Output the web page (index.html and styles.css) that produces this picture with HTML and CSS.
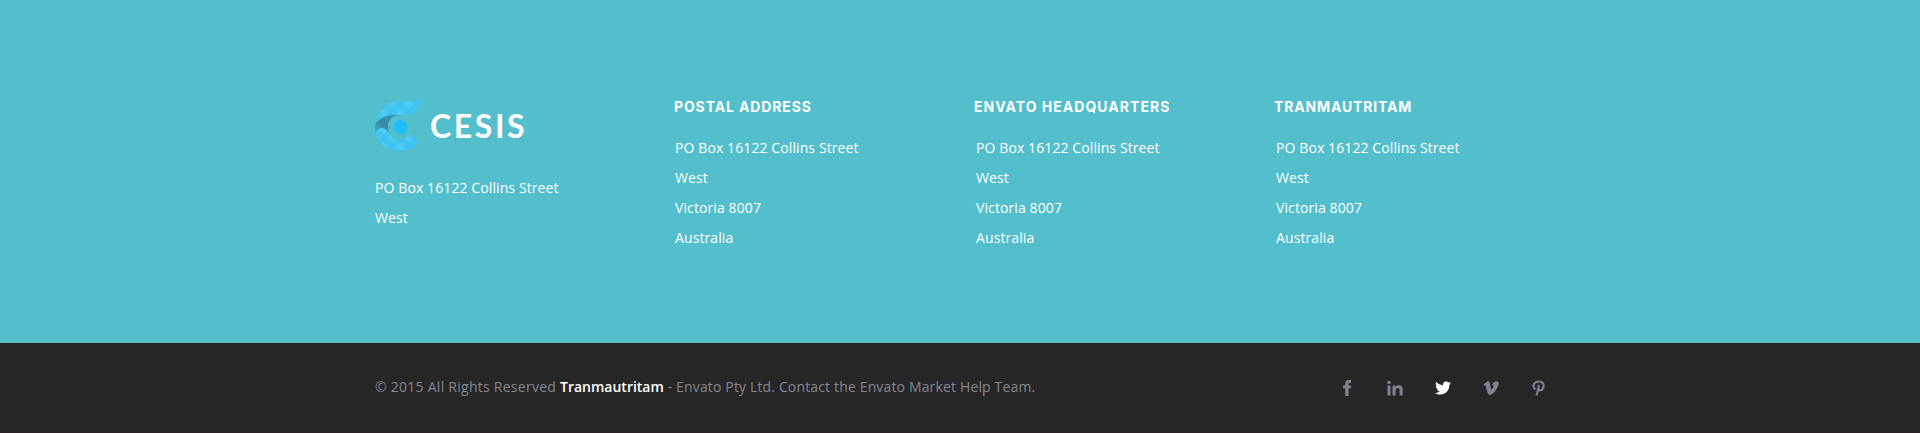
FILE: index.html
```html
<!DOCTYPE html>
<html lang="en">
<head>
<meta charset="utf-8">
<title>Cesis</title>
<link rel="stylesheet" href="styles.css">
</head>
<body>
<footer class="footer">
  <section class="widgets">
    <div class="column">
      <div class="logo">
        <svg class="logo-mark" width="48" height="52" viewBox="0 0 48 52">
          <defs>
            <pattern id="weave" width="12" height="12" patternUnits="userSpaceOnUse" patternTransform="rotate(45)">
              <rect width="12" height="12" fill="#43c7f2"/>
              <rect width="6" height="6" fill="#50cbf3"/>
              <rect x="6" y="6" width="6" height="6" fill="#3cc3f4"/>
            </pattern>
            <linearGradient id="fold" x1="0" y1="1" x2="1" y2="0">
              <stop offset="0" stop-color="#45b2d6"/>
              <stop offset=".4" stop-color="#3889a5"/>
              <stop offset="1" stop-color="#3f9ab6"/>
            </linearGradient>
          </defs>
          <path fill="url(#weave)" d="M0 28C0 23 1 19 3 15C7 6 15 1 24 1C32 1 39 2 46 0C44 8 40 13 33 15H25C17 16 13 20 13 27C13 34 18 40 25 40C29 40 32 38 34 34L43 41C39 47 33 51 25 51C11 51 0 41 0 28Z"/>
          <path fill="#53becc" d="M0 14H3.500L1 24H0Z"/>
          <path fill="url(#fold)" d="M0 30C0 27 0 25 1 23C6 17 14 14 25 15C17 16 13 20 13 27L14 33C9 26 4 27 0 33Z"/>
          <circle cx="25.500" cy="27" r="7" fill="#1fbdfa"/>
        </svg>
        <span class="logo-name">CESIS</span>
      </div>
      <p class="address">PO Box 16122 Collins Street<br>West</p>
    </div>
    <div class="column">
      <h3 class="title title-postal">POSTAL ADDRESS</h3>
      <p class="address">PO Box 16122 Collins Street<br>West<br>Victoria 8007<br>Australia</p>
    </div>
    <div class="column">
      <h3 class="title title-envato">ENVATO HEADQUARTERS</h3>
      <p class="address indented">PO Box 16122 Collins Street<br>West<br>Victoria 8007<br>Australia</p>
    </div>
    <div class="column">
      <h3 class="title title-tran">TRANMAUTRITAM</h3>
      <p class="address indented">PO Box 16122 Collins Street<br>West<br>Victoria 8007<br>Australia</p>
    </div>
  </section>
  <section class="bar">
    <p class="copyright"><span class="rights">© 2015 All Rights Reserved </span><strong class="brand">Tranmautritam</strong> - Envato Pty Ltd. Contact the Envato Market Help Team.</p>
    <nav class="social">
      <svg class="icon" viewBox="0 0 16 16"><path d="M12 0V3H10.500Q9.500 3 9.500 4V5.500H12L11.700 8.300H9.500V16H6.200V8.300H4V5.500H6.200V3.700C6.200 1.300 7.500 0 9.800 0Z"/></svg>
      <svg class="icon" viewBox="0 0 16 16"><circle cx="2" cy="2.500" r="1.800"/><path d="M.5 5.500H3.500V15.500H.5ZM5.500 5.500H8.500V7C9.200 5.700 10.300 5.200 11.700 5.200C14.500 5.200 15.700 7 15.700 9.800V15.500H12.600V10.300C12.600 8.800 12.200 7.900 10.900 7.900C9.300 7.900 8.600 9 8.600 10.500V15.500H5.500Z"/></svg>
      <svg class="icon icon-active" viewBox="0 0 16 16"><path d="M16 3Q15.200 3.500 14.200 3.600Q15.200 3 15.600 1.800Q14.600 2.400 13.500 2.600C12.500 1.500 11 1.300 9.800 1.800C8.300 2.500 7.600 4 8 5.400Q3.900 5.200 1.200 2C.3 3.500.6 5.300 2.200 6.400Q1.400 6.400.7 6C.7 7.600 1.700 8.900 3.300 9.300Q2.600 9.500 1.900 9.300C2.300 10.600 3.500 11.500 4.900 11.600Q2.800 13.200 0 13C5 16 10.200 14.300 12.700 10.700Q14.500 8.200 14.400 4.800Q15.400 4.100 16 3Z"/></svg>
      <svg class="icon" viewBox="0 0 16 16"><path d="M.3 4.600L4 1.700C6 .6 6.800 2.100 7.200 4.500C7.600 7.300 8 9.400 8.500 9.400C9.100 9.400 10.600 6.900 10.500 6C10.400 5.100 9.700 5.200 8.900 5.500C9.900 2.400 11.800 1 13.900 1.200C15.500 1.300 15.900 2.700 15.600 4.500C15 8 11 13 8.100 14.700C6.200 15.500 5 14 4.400 12.200L2.700 6.100C2.300 5 1.900 5.300 1 5.800Z"/></svg>
      <svg class="icon" viewBox="0 0 16 16"><path d="M4.300 9.300C1.400 7.400 2.100 3.600 4.800 2.200C7.800.7 12.300 1.500 12.600 5C12.800 8 11.100 10.400 9 10.200C8 10.100 7.300 9.400 7.300 9.400M8.100 5L5.600 15.500" fill="none" stroke="currentColor" stroke-width="2.100"/></svg>
    </nav>
  </section>
</footer>
</body>
</html>
```
FILE: styles.css
```css
body {
  margin: 0;
  font-family: "Open Sans", sans-serif;
  font-size: 14px;
  color: #fff;
  background: #262626;
}

.footer {
  box-sizing: border-box;
  height: 433px;
  border-bottom: 1px solid #2a2127;
  overflow: hidden;
}

.widgets {
  display: grid;
  grid-template-columns: repeat(4, 300px);
  justify-content: center;
  box-sizing: border-box;
  height: 343px;
  padding-top: 100px;
  padding-left: 30px;
  background: #53becc;
}

.logo {
  display: flex;
  height: 73px;
}

.logo-mark {
  flex: none;
}

.logo-name {
  margin-left: 7px;
  font: 700 32px/51px Lato, sans-serif;
  letter-spacing: 2.6px;
}

.title {
  margin: 0 0 0 -1px;
  height: 33px;
  font: 700 14px/14px Inter, sans-serif;
  white-space: nowrap;
}

.title-postal {
  letter-spacing: 0.88px;
}

.title-envato {
  letter-spacing: 1.02px;
}

.title-tran {
  letter-spacing: 0.85px;
}

.address {
  margin: 0;
  line-height: 30px;
  letter-spacing: 0.1px;
  white-space: nowrap;
}

.indented {
  padding-left: 1px;
}

.bar {
  display: flex;
  justify-content: space-between;
  box-sizing: border-box;
  width: 1174px;
  height: 90px;
  margin: 0 auto;
  padding-top: 34px;
  padding-left: 2px;
}

.copyright {
  margin: 0;
  line-height: 20px;
  letter-spacing: 0.15px;
  color: #84868f;
  white-space: nowrap;
}

.rights {
  letter-spacing: 0.26px;
}

.brand {
  font-weight: 600;
  letter-spacing: 0;
  color: #fff;
}

.social {
  display: flex;
  gap: 32px;
  padding-top: 3px;
}

.icon {
  width: 16px;
  height: 16px;
  color: #80828e;
  fill: currentColor;
}

.icon-active {
  color: #fff;
}
```
